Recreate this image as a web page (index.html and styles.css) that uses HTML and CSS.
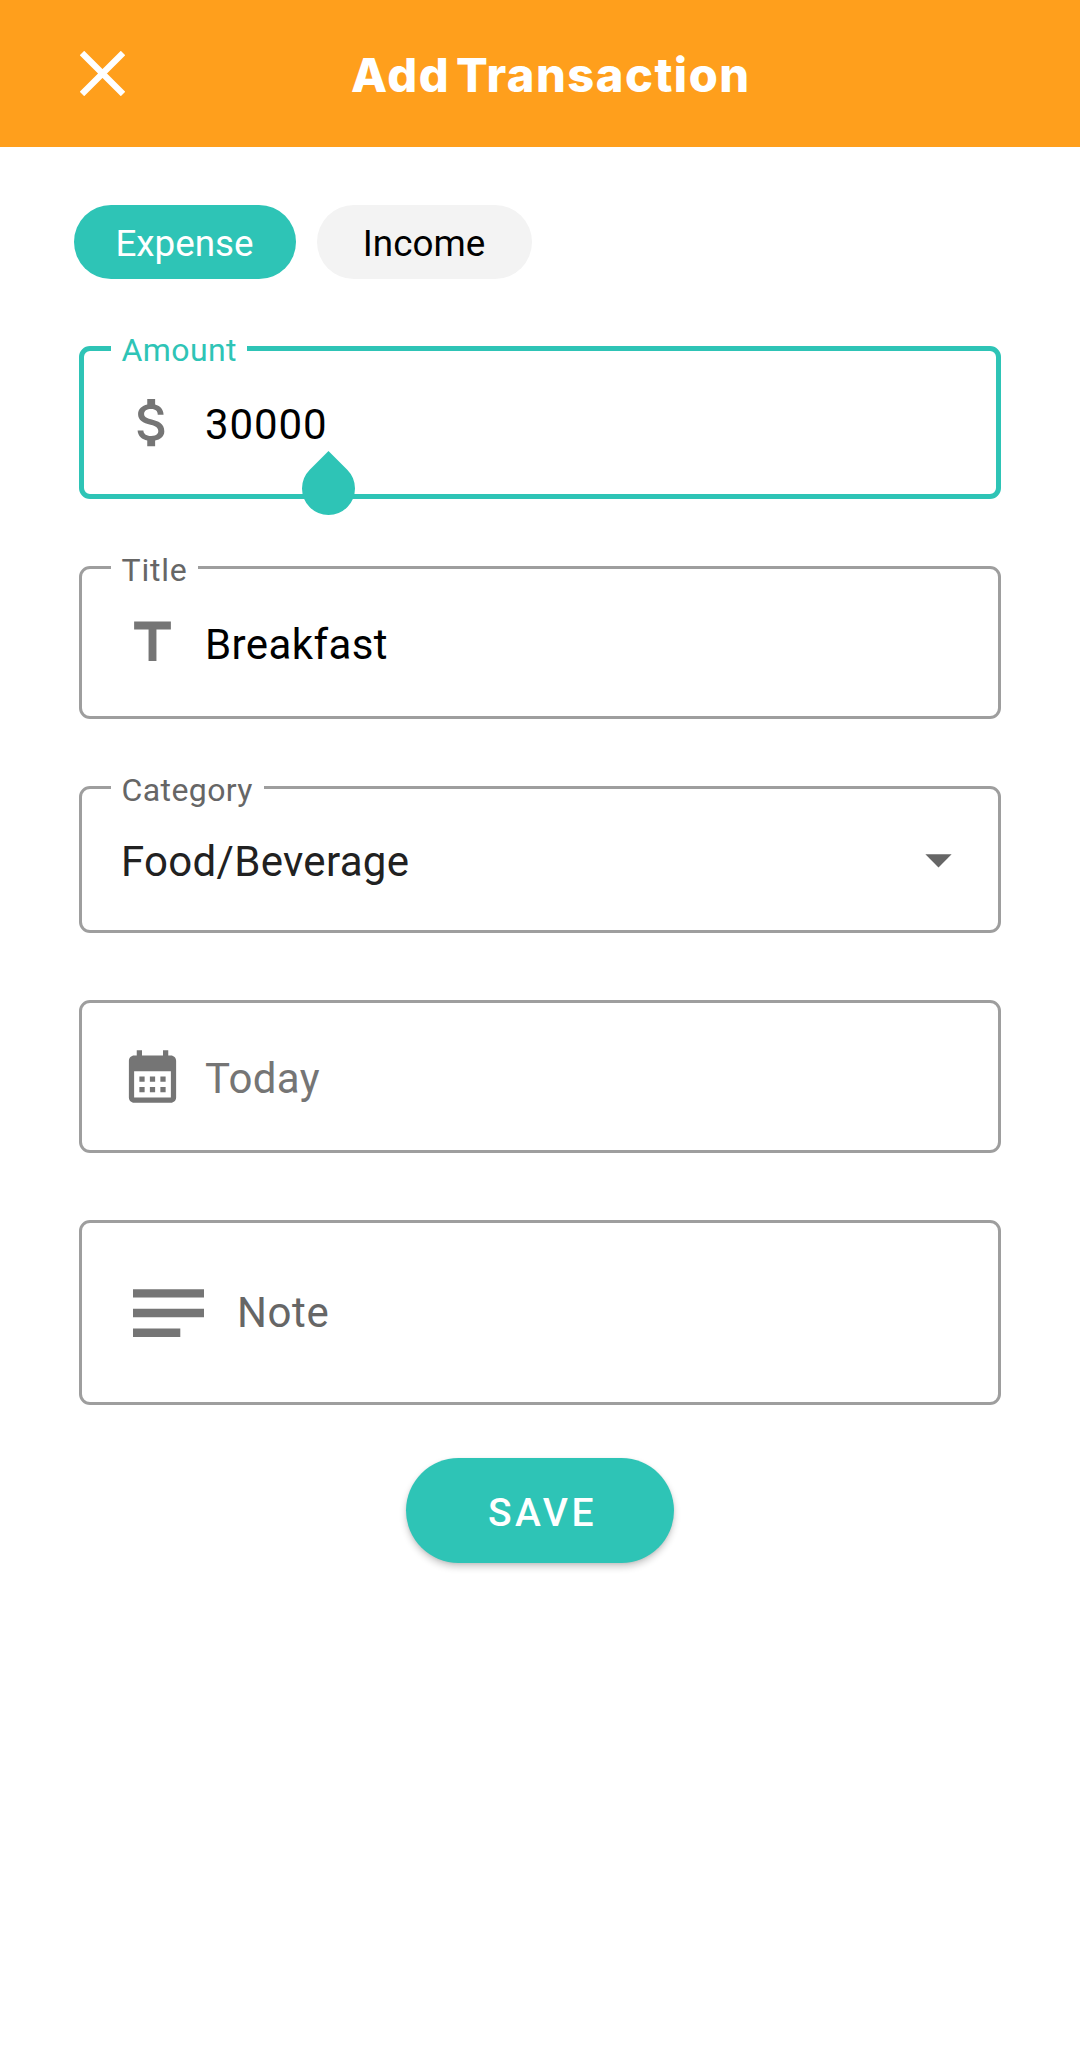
FILE: index.html
```html
<!DOCTYPE html>
<html lang="en">
<head>
<meta charset="utf-8">
<title>Add Transaction</title>
<link rel="stylesheet" href="styles.css">
</head>
<body>
<header class="app-bar">
  <svg class="close" viewBox="0 0 45 45"><path d="M2 2L43 43M43 2L2 43"/></svg>
  <h1 class="heading">Add Transaction</h1>
</header>
<main class="form">
  <div class="chips">
    <span class="chip chip-expense">Expense</span>
    <span class="chip chip-income">Income</span>
  </div>
  <div class="field focused">
    <span class="label">Amount</span>
    <svg class="icon" viewBox="0 0 24 24"><path d="M11.8 10.9c-2.27-.59-3-1.2-3-2.15 0-1.09 1.01-1.85 2.7-1.85 1.78 0 2.44.85 2.5 2.1h2.21c-.07-1.72-1.12-3.3-3.21-3.81V3h-3v2.16c-1.94.42-3.5 1.68-3.5 3.61 0 2.31 1.91 3.46 4.7 4.13 2.5.6 3 1.48 3 2.41 0 .69-.49 1.79-2.7 1.79-2.06 0-2.87-.92-2.98-2.1h-2.2c.12 2.19 1.76 3.42 3.68 3.83V21h3v-2.15c1.95-.37 3.5-1.5 3.5-3.55 0-2.84-2.43-3.81-4.7-4.4z"/></svg>
    <span class="value amount">30000</span>
    <span class="handle"></span>
  </div>
  <div class="field">
    <span class="label label-title">Title</span>
    <svg class="icon" viewBox="0 0 24 24"><path d="M5 4v3h5.5v12h3V7H19V4z"/></svg>
    <span class="value">Breakfast</span>
  </div>
  <div class="field select">
    <span class="label label-category">Category</span>
    <span class="value">Food/Beverage</span>
    <svg class="icon arrow" viewBox="0 0 24 24"><path d="M7 10l5 5 5-5z"/></svg>
  </div>
  <div class="field">
    <svg class="icon" viewBox="0 0 24 24"><path d="M19 4h-1V2h-2v2H8V2H6v2H5c-1.11 0-1.99.9-1.99 2L3 20c0 1.1.89 2 2 2h14c1.1 0 2-.9 2-2V6c0-1.1-.9-2-2-2zm0 16H5V10h14v10zM9 14H7v-2h2v2zm4 0h-2v-2h2v2zm4 0h-2v-2h2v2zm-8 4H7v-2h2v2zm4 0h-2v-2h2v2zm4 0h-2v-2h2v2z"/></svg>
    <span class="value today">Today</span>
  </div>
  <div class="field note-field">
    <svg class="lines" viewBox="0 0 71 48"><path d="M0 .2h71v8.3H0zM0 19.8h71v8.4H0zM0 39.6h47.3v8.3H0z"/></svg>
    <span class="value note">Note</span>
  </div>
  <button class="save" type="button">SAVE</button>
</main>
</body>
</html>
```
FILE: styles.css
```css
* { box-sizing: border-box; }
body {
  margin: 0;
  min-height: 2069px;
  background: #fff;
  font-family: Roboto, sans-serif;
}
.app-bar {
  display: grid;
  grid-template-columns: 45px 1fr;
  align-items: center;
  height: 147px;
  padding-left: 80px;
  background: #ff9f1c;
}
.close {
  width: 45px;
  height: 45px;
  fill: none;
  stroke: #fff;
  stroke-width: 6.2;
}
.heading {
  margin: 2px 0 0;
  padding-left: 226px;
  color: #fff;
  font: 800 47px/60px Inter, sans-serif;
  letter-spacing: 1.5px;
  word-spacing: -6px;
  white-space: nowrap;
}
.form {
  display: flex;
  flex-direction: column;
  gap: 67px;
  padding: 58px 79px 0;
}
.chips {
  display: flex;
  gap: 21px;
  margin-left: -5px;
}
.chip {
  height: 74px;
  border-radius: 37px;
  padding-top: 2px;
  font-size: 36.8px;
  line-height: 74px;
  text-align: center;
}
.chip-expense {
  width: 222px;
  padding-right: 1px;
  background: #2ec4b6;
  color: #fff;
}
.chip-income {
  width: 215px;
  padding-right: 1px;
  background: #f3f3f3;
  color: #000;
}
.field {
  position: relative;
  display: flex;
  align-items: center;
  height: 153px;
  padding-left: 39px;
  border: 3px solid #9e9e9e;
  border-radius: 11px;
}
.field.focused {
  padding-left: 37px;
  border: 5px solid #2ec4b6;
}
.label {
  position: absolute;
  left: 29px;
  top: -18px;
  width: 87px;
  padding-left: 10.5px;
  background: #fff;
  color: #666;
  font-size: 32px;
  line-height: 38px;
  letter-spacing: .4px;
}
.focused .label {
  left: 27px;
  top: -20px;
  width: 136px;
  color: #2ec4b6;
}
.label.label-title { letter-spacing: .8px; }
.label-category { width: 153px; }
.icon {
  width: 63px;
  height: 63px;
  fill: #757575;
}
.value {
  margin-left: 21px;
  padding-top: 4px;
  color: #000;
  font-size: 42px;
  line-height: 50px;
  letter-spacing: .4px;
}
.value.amount { letter-spacing: .9px; }
.handle {
  position: absolute;
  left: 218px;
  top: 110.5px;
  width: 53px;
  height: 53px;
  border-radius: 0 50% 50% 50%;
  background: #2ec4b6;
  transform: rotate(45deg);
}
.select {
  justify-content: space-between;
  height: 147px;
  padding-right: 28px;
}
.select .value {
  margin-left: 0;
  color: #212121;
  letter-spacing: .3px;
}
.arrow { fill: #666; }
.value.today { color: #757575; }
.note-field {
  height: 185px;
  padding-left: 51px;
}
.lines {
  width: 71px;
  height: 48px;
  fill: #757575;
}
.value.note {
  margin-left: 33px;
  padding-top: 0;
  color: #666;
  letter-spacing: .6px;
}
.save {
  align-self: center;
  width: 268px;
  height: 105px;
  margin-top: -14px;
  padding: 4px 0 0 5px;
  border: 0;
  border-radius: 53px;
  background: #2ec4b6;
  box-shadow: 0 4px 7px rgba(0, 0, 0, .2), 0 1px 3px rgba(0, 0, 0, .08);
  color: #fff;
  font: 500 39px/50px Roboto, sans-serif;
  letter-spacing: 3.5px;
}
```
